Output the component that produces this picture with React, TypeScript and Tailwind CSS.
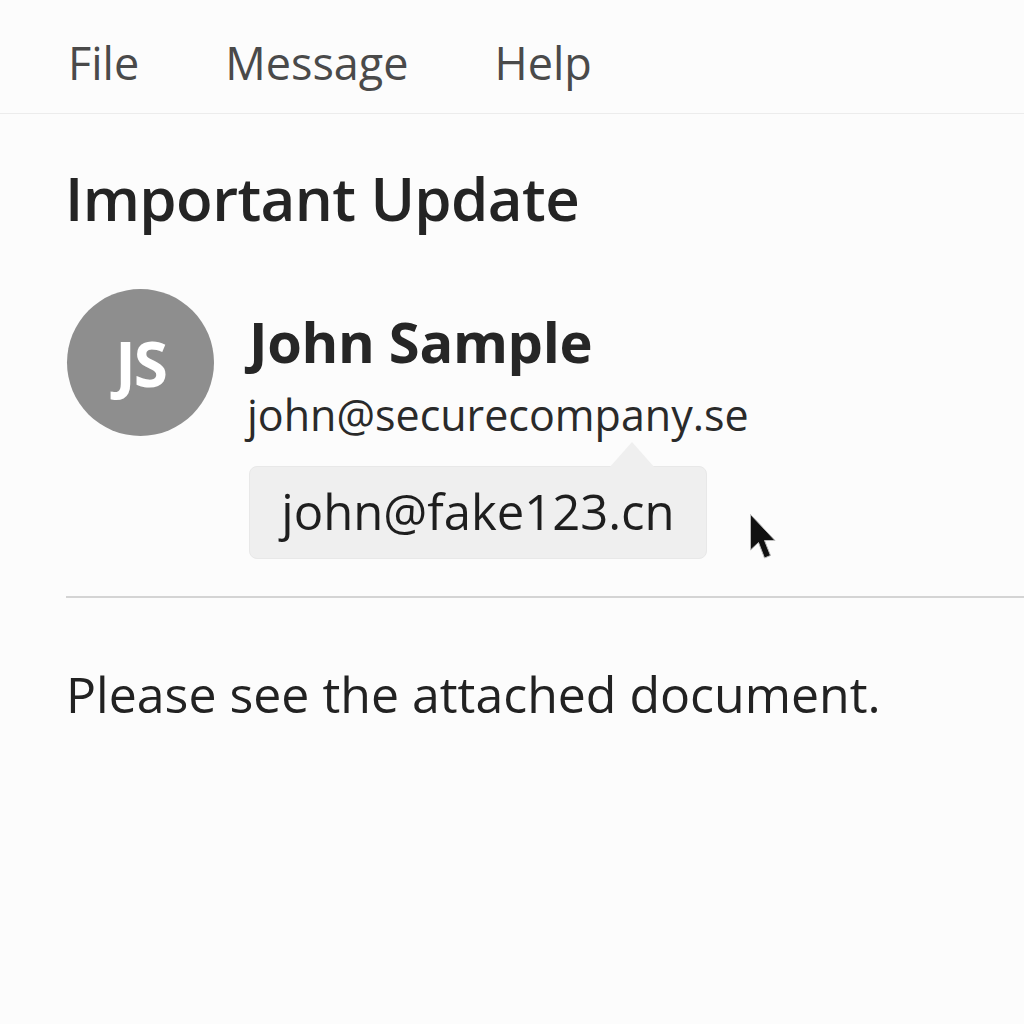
import React from "react";

export default function App() {
  return (
    <div className="w-[1024px] h-[1024px] bg-[#fcfcfc] overflow-hidden" style={{ fontFamily: '"Open Sans", "Noto Sans", sans-serif' }}>
      <div className="h-[114px] border-b border-[#ececec] flex items-start pt-[40px] pl-[68px] gap-[86px] text-[45px] leading-none text-[#4a4a4a]">
        <span>File</span>
        <span>Message</span>
        <span>Help</span>
      </div>
      <div className="pl-[65px] mt-[54px] text-[60px] font-semibold text-[#242424] leading-none tracking-[-0.6px]">Important Update</div>
      <div className="flex pl-[67px] mt-[61px]">
        <div className="w-[147px] h-[147px] rounded-full bg-[#8e8e8e] flex items-center justify-center text-white text-[62px] font-bold leading-none tracking-[-2px] shrink-0">JS</div>
        <div className="ml-[35px] flex flex-col">
          <div className="text-[56px] font-bold text-[#262626] leading-none mt-[24px] tracking-[-0.3px]">John Sample</div>
          <div className="text-[43px] text-[#2a2a2a] leading-none mt-[24px] -ml-[2px]">john@securecompany.se</div>
          <div className="relative mt-[30px] w-[458px] h-[93px] rounded-[8px] bg-[#efefef] border border-[#e8e8e8] flex items-center justify-center text-[49px] leading-none text-[#1e1e1e]">
            <div className="absolute -top-[25px] left-[359px] w-0 h-0 border-l-[23px] border-r-[23px] border-b-[26px] border-l-transparent border-r-transparent border-b-[#efefef]" />
            <span className="-mt-[2px]">john@fake123.cn</span>
            <svg className="absolute left-[499px] top-[46px]" width="30" height="50" viewBox="0 0 30 50">
              <path d="M1.5 1.5 L1.5 37 L9.5 29.5 L15.5 45 L21.5 42.5 L15.5 27.5 L26 27.5 Z" fill="#111" stroke="#bbb" strokeWidth="1" strokeLinejoin="round" />
            </svg>
          </div>
        </div>
      </div>
      <div className="ml-[66px] mt-[37px] border-t-2 border-[#d4d4d4]" />
      <div className="pl-[66px] mt-[71px] text-[50px] text-[#222] leading-none">Please see the attached document.</div>
    </div>
  );
}
